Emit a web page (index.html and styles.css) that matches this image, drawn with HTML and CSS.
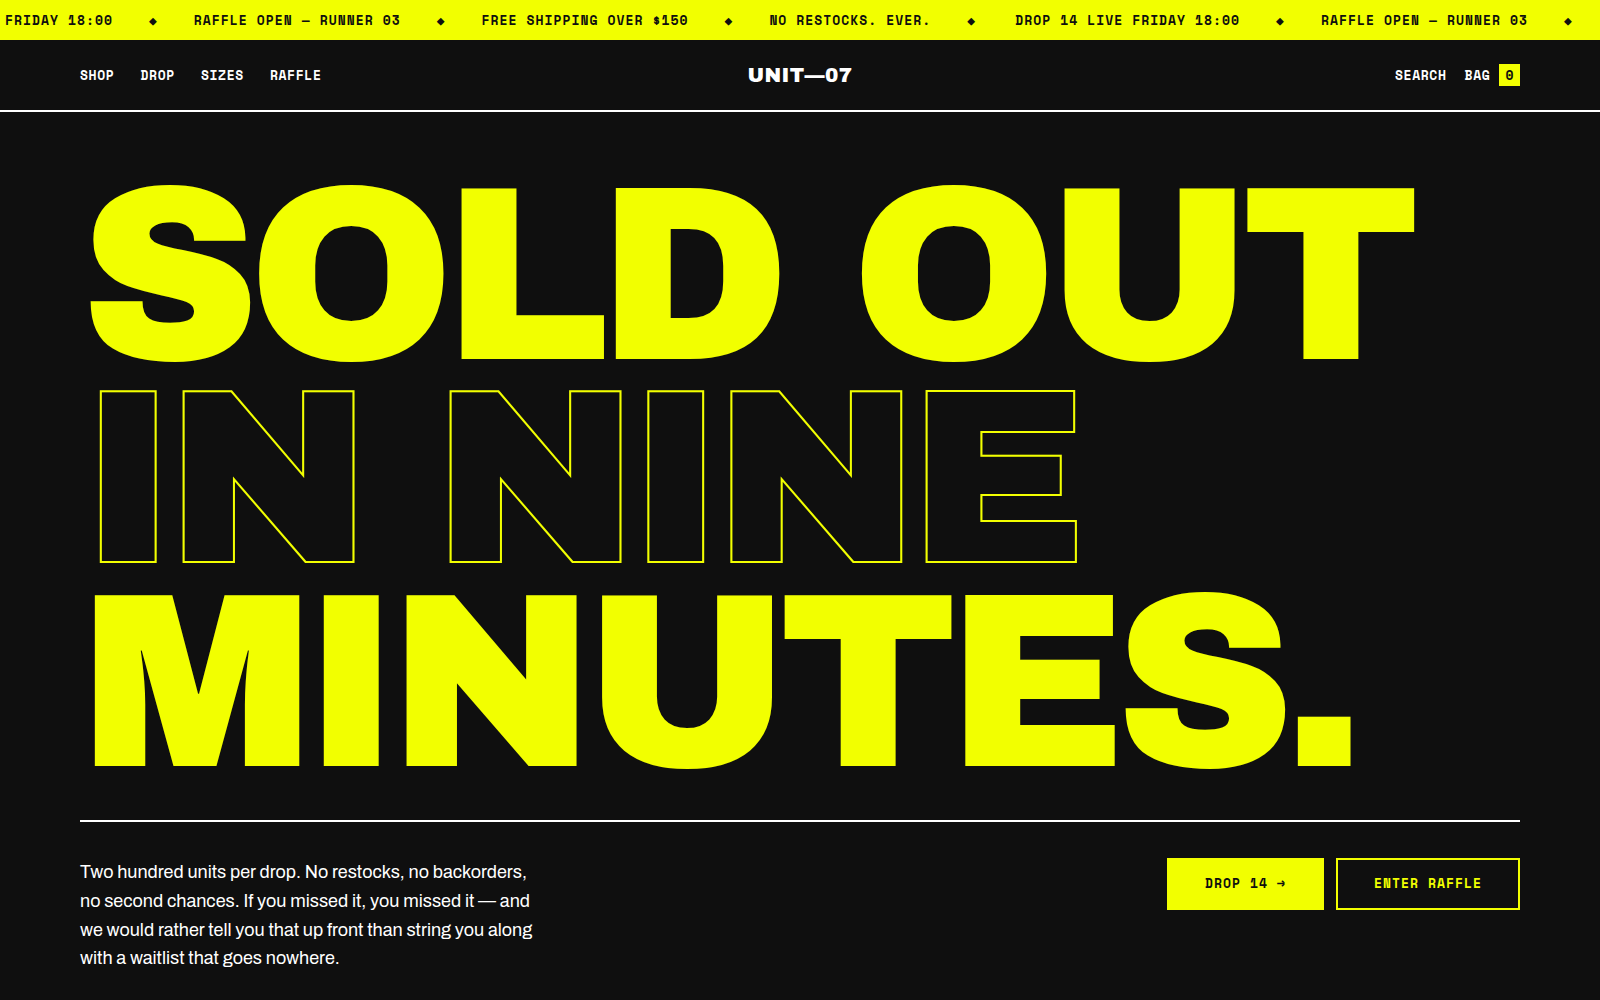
FILE: index.html
```html
<!DOCTYPE html>
<html lang="en">
<head>
    <meta charset="UTF-8">
    <meta name="viewport" content="width=device-width, initial-scale=1.0">
    <title>UNIT—07</title>
    <link rel="stylesheet" href="styles.css">
</head>
<body>
    <div class="ticker">
        <div class="ticker-track">
            <div class="ticker-group">
                <span>DROP 14 LIVE FRIDAY 18:00</span><span>◆</span>
                <span>RAFFLE OPEN — RUNNER 03</span><span>◆</span>
                <span>FREE SHIPPING OVER $150</span><span>◆</span>
                <span>NO RESTOCKS. EVER.</span><span>◆</span>
            </div>
            <div class="ticker-group">
                <span>DROP 14 LIVE FRIDAY 18:00</span><span>◆</span>
                <span>RAFFLE OPEN — RUNNER 03</span><span>◆</span>
            </div>
        </div>
    </div>
    <header class="header">
        <nav class="nav">
            <a href="#shop">SHOP</a>
            <a href="#drop">DROP</a>
            <a href="#sizes">SIZES</a>
            <a href="#raffle">RAFFLE</a>
        </nav>
        <a class="logo" href="#">UNIT—07</a>
        <div class="tools">
            <a href="#search">SEARCH</a>
            <a class="bag" href="#bag">BAG <span class="count">0</span></a>
        </div>
    </header>
    <main class="hero">
        <h1>SOLD OUT<br><span class="outline">IN NINE</span><br>MINUTES.</h1>
        <div class="hero-foot">
            <p>Two hundred units per drop. No restocks, no backorders, no second chances. If you missed it, you missed it — and we would rather tell you that up front than string you along with a waitlist that goes nowhere.</p>
            <div class="actions">
                <a class="btn btn-fill" href="#drop">DROP 14 →</a>
                <a class="btn" href="#raffle">ENTER RAFFLE</a>
            </div>
        </div>
    </main>
</body>
</html>
```
FILE: styles.css
```css
:root {
    --ink: #0f0f0f;
    --acid: #f2ff00;
    --mono: "Space Mono", "DejaVu Sans Mono", monospace;
    --display: "Archivo Black", Inter, sans-serif;
}
* { box-sizing: border-box; }
body { margin: 0; background: var(--ink); color: #fff; font-family: Archivo, "Liberation Sans", Arial, sans-serif; overflow-x: hidden; }
a { color: inherit; text-decoration: none; }

/* ticker */
.ticker { background: var(--acid); color: var(--ink); overflow: hidden; }
.ticker-track {
    display: flex;
    gap: 39px;
    margin-left: -112px;
    font: bold 13px/40px var(--mono);
    letter-spacing: 0.08em;
    white-space: nowrap;
}
.ticker-group { display: flex; gap: 36px; }

/* header */
.header {
    display: grid;
    grid-template-columns: 1fr auto 1fr;
    align-items: center;
    height: 72px;
    padding: 0 5%;
    border-bottom: 2px solid #fff;
    font: bold 13px/20px var(--mono);
    letter-spacing: 0.05em;
}
.nav { display: flex; gap: 26px; }
.logo { font: 400 20px/24px var(--display); letter-spacing: 0.02em; }
.tools { display: flex; justify-content: flex-end; align-items: center; gap: 18px; }
.bag { display: flex; align-items: center; gap: 9px; }
.count { padding: 1px 6px; background: var(--acid); color: var(--ink); }

/* hero */
.hero { padding: 63px 5% 36px; }
h1 {
    margin: 0 0 35px;
    color: var(--acid);
    font: 400 15.5vw/0.82 var(--display);
    letter-spacing: -0.045em;
    white-space: nowrap;
}
.outline { color: transparent; -webkit-text-stroke: 2px var(--acid); }
.hero-foot {
    display: flex;
    justify-content: space-between;
    align-items: flex-start;
    gap: 40px;
    padding-top: 36px;
    border-top: 2px solid #fff;
}
.hero-foot p { max-width: 460px; margin: 0; font-size: 18px; line-height: 1.6; }
.actions { display: flex; gap: 12px; }
.btn {
    padding: 14px 36px 16px;
    border: 2px solid var(--acid);
    color: var(--acid);
    font: bold 13px/18px var(--mono);
    letter-spacing: 0.08em;
    white-space: nowrap;
}
.btn-fill { background: var(--acid); color: var(--ink); }
```
